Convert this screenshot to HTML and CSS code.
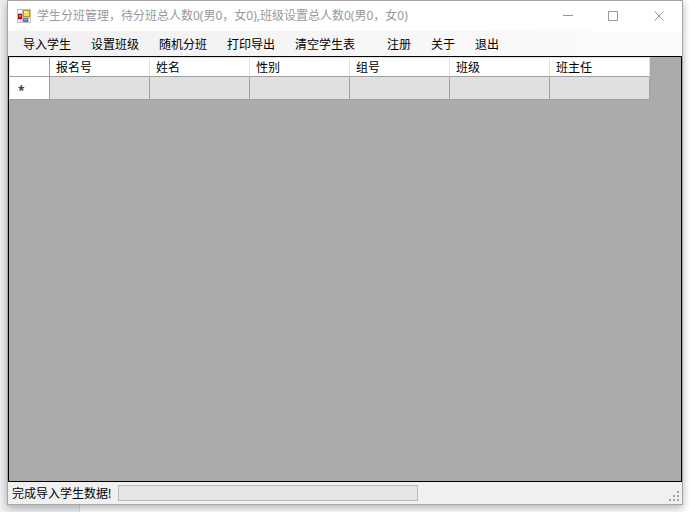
FILE: index.html
```
<!DOCTYPE html>
<html lang="zh-CN">

<head>
    <title>学生分班管理</title>
    <meta charset="utf-8">
    <meta name="viewport" content="width=device-width, initial-scale=1.0">
    <link rel="stylesheet" href="styles.css">
</head>

<body>
    <div class="window">
        <header class="titlebar">
            <svg class="logo" width="14" height="14" viewBox="0 0 14 14">
                <rect width="14" height="14" fill="#c0c0c0" />
                <path d="M1 1h4v3H1zM1 11h2v2H1zM4 11h1v2H4zM12 9h1v4h-1z" fill="#fff" />
                <rect x="1" y="5" width="4" height="5" fill="#b01010" />
                <rect x="2" y="6" width="2" height="2" fill="#f07060" />
                <rect x="6" y="1" width="7" height="7" fill="#c88a10" />
                <rect x="7" y="2" width="5" height="5" fill="#ffd54a" />
                <rect x="7" y="2" width="3" height="2" fill="#fff0a0" />
                <rect x="6" y="9" width="5" height="4" fill="#4a80e0" />
                <rect x="7" y="10" width="3" height="1" fill="#80aaf0" />
            </svg>
            <h1>学生分班管理&#xFF0C;待分班总人数0(男0&#xFF0C;女0),班级设置总人数0(男0&#xFF0C;女0)</h1>
            <div class="controls">
                <button aria-label="最小化"><svg width="11" height="11"><path d="M1 4.5h10" /></svg></button>
                <button aria-label="最大化"><svg width="11" height="11"><path d="M.5 .5h9v9h-9z" /></svg></button>
                <button aria-label="关闭"><svg width="11" height="11"><path d="M.5 .5l9 9M9.5 .5l-9 9" /></svg></button>
            </div>
        </header>

        <nav class="menu">
            <button>导入学生</button>
            <button>设置班级</button>
            <button>随机分班</button>
            <button>打印导出</button>
            <button class="last">清空学生表</button>
            <button>注册</button>
            <button>关于</button>
            <button>退出</button>
        </nav>

        <main>
            <table>
                <tr>
                    <th class="row-head"></th>
                    <th>报名号</th>
                    <th>姓名</th>
                    <th>性别</th>
                    <th>组号</th>
                    <th>班级</th>
                    <th>班主任</th>
                </tr>
                <tr>
                    <th class="row-head new-row"><span>*</span></th>
                    <td></td>
                    <td></td>
                    <td></td>
                    <td></td>
                    <td></td>
                    <td></td>
                </tr>
            </table>
        </main>

        <footer>
            <label for="progress">完成导入学生数据!</label>
            <progress id="progress" value="0" max="100"></progress>
            <svg class="grip" width="11" height="11" viewBox="0 0 11 11">
                <path d="M9 1h2v2H9zM5 5h2v2H5zM9 5h2v2H9zM1 9h2v2H1zM5 9h2v2H5zM9 9h2v2H9z" />
            </svg>
        </footer>
    </div>
</body>

</html>
```
FILE: styles.css
```
* {
    box-sizing: border-box;
}

body {
    display: flex;
    height: 100vh;
    margin: 0;
    padding: 0 7px 7px;
    overflow: hidden;
    background: linear-gradient(to right, #eef0f3 79px, #d8dadc 79px, #d8dadc 80px, #fff 80px);
    color: black;
    font: 12px/16px "Noto Sans", "Noto Sans CJK SC", sans-serif;
}

button {
    padding: 0;
    border: 0;
    background: none;
    color: inherit;
    font: inherit;
}

.window {
    display: flex;
    flex-direction: column;
    flex: 1;
    min-width: 0;
    border: 1px solid #a6a6a6;
    background-color: #f0f0f0;
    box-shadow: 0 3px 8px rgba(0, 0, 0, 0.3);
}

.titlebar {
    display: flex;
    align-items: center;
    height: 30px;
    padding-left: 9px;
    background-color: white;
    color: #999;
}

.titlebar h1 {
    flex: 1;
    margin: 0 0 0 6px;
    font-size: 12px;
    font-weight: normal;
    white-space: nowrap;
}

.controls {
    display: flex;
}

.controls button {
    display: flex;
    align-items: center;
    justify-content: center;
    width: 46px;
    height: 30px;
}

.controls path {
    fill: none;
    stroke: #999;
}

.menu {
    display: flex;
    align-items: center;
    gap: 20px;
    height: 25px;
    padding: 2px 0 0 15px;
    background: linear-gradient(to right, #f0f0f0, #fcfcfc);
}

.menu button {
    white-space: nowrap;
}

.menu .last {
    margin-right: 12px;
}

main {
    flex: 1;
    border: 1px solid black;
    background-color: #ababab;
}

table {
    width: 641px;
    border-collapse: separate;
    border-spacing: 0;
    table-layout: fixed;
}

th,
td {
    width: 100px;
    height: 23px;
    padding: 0 6px;
    border-right: 1px solid #a0a0a0;
    border-bottom: 1px solid #a0a0a0;
    background-color: #e0e0e0;
    text-align: left;
    font-weight: normal;
}

th {
    height: 20px;
    padding-top: 2px;
    border-top: 1px solid #e3e3e3;
    border-right-color: #e3e3e3;
    background-color: white;
}

.row-head {
    width: 41px;
    border-left: 1px solid #e3e3e3;
    border-right-color: #a0a0a0;
}

.new-row {
    height: 23px;
    padding-left: 8px;
    border-top: 0;
    color: #404040;
    font-weight: bold;
}

.new-row span {
    display: block;
    padding-top: 4px;
}

footer {
    display: flex;
    align-items: center;
    height: 22px;
    padding: 0 3px 0 4px;
}

footer label {
    width: 106px;
    padding-top: 2px;
    white-space: nowrap;
}

progress {
    appearance: none;
    width: 300px;
    height: 16px;
    border: 1px solid #bcbcbc;
    background-color: #e6e6e6;
}

progress::-webkit-progress-bar {
    background-color: #e6e6e6;
}

.grip {
    align-self: flex-end;
    margin: 0 0 3px auto;
    fill: #a0a0a0;
}
```
